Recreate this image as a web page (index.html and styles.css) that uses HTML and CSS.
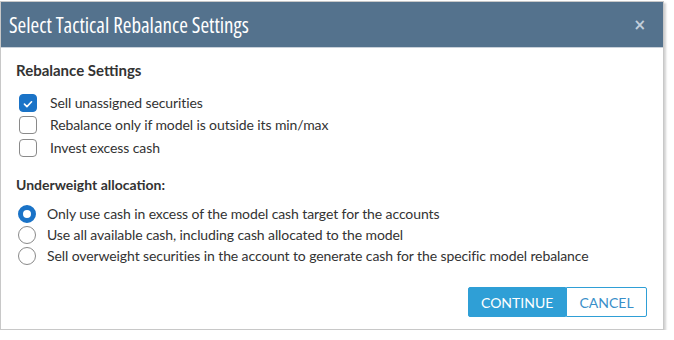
FILE: index.html
```html
<!DOCTYPE html>
<html>
<head>
<meta charset="utf-8">
<link rel="stylesheet" href="styles.css">
</head>
<body>
<div class="dialog">
  <div class="header">
    <span class="title">Select Tactical Rebalance Settings</span>
    <span class="close">×</span>
  </div>
  <div class="body">
    <div class="section-title">Rebalance Settings</div>
    <div class="options checks">
      <label class="opt"><span class="box checked"><svg viewBox="0 0 18 18" width="18" height="18"><path d="M5 9.2 L7.8 12 L13 6.5" fill="none" stroke="#fff" stroke-width="1.8" stroke-linecap="round" stroke-linejoin="round"/></svg></span>Sell unassigned securities</label>
      <label class="opt"><span class="box"></span>Rebalance only if model is outside its min/max</label>
      <label class="opt"><span class="box"></span>Invest excess cash</label>
    </div>
    <div class="sub-title">Underweight allocation:</div>
    <div class="options radios">
      <label class="opt"><span class="radio checked"></span>Only use cash in excess of the model cash target for the accounts</label>
      <label class="opt"><span class="radio"></span>Use all available cash, including cash allocated to the model</label>
      <label class="opt"><span class="radio"></span>Sell overweight securities in the account to generate cash for the specific model rebalance</label>
    </div>
    <div class="footer">
      <button class="btn primary">CONTINUE</button><button class="btn secondary">CANCEL</button>
    </div>
  </div>
</div>
</body>
</html>
```

FILE: styles.css
```css
html, body {
  margin: 0;
  padding: 0;
  background: #fff;
}
body {
  font-family: Lato, "Open Sans", sans-serif;
  color: #333;
}
.dialog {
  margin: 1px 0 0 0;
  width: 664px;
  height: 329px;
  border: 1px solid #c8c8c8;
  box-shadow: 2px 2px 2px rgba(0,0,0,0.18);
  box-sizing: border-box;
  background: #fff;
  display: flex;
  flex-direction: column;
}
.header {
  height: 46px;
  flex: none;
  background: #54728d;
  border-bottom: 1px solid #c9d1da;
  display: flex;
  align-items: center;
  justify-content: space-between;
  padding: 0 17px 0 8px;
  box-sizing: border-box;
}
.title {
  font-family: "Open Sans", sans-serif;
  font-stretch: 82%;
  font-size: 21px;
  color: #fff;
}
.close {
  color: #c3cfdb;
  font-size: 15px;
  font-weight: bold;
  font-family: "DejaVu Sans", sans-serif;
}
.body {
  padding: 13px 0 0 15px;
  flex: 1;
  display: flex;
  flex-direction: column;
}
.section-title {
  font-weight: bold;
  font-size: 15px;
  color: #333;
  line-height: 18px;
}
.options {
  display: flex;
  flex-direction: column;
}
.checks {
  margin-top: 15px;
  gap: 4.3px;
}
.opt {
  display: flex;
  align-items: center;
  font-size: 14px;
  letter-spacing: -0.1px;
  line-height: 18px;
  color: #333;
}
.checks .opt {
  gap: 13px;
  padding-left: 3px;
}
.box {
  width: 18px;
  height: 18px;
  box-sizing: border-box;
  border: 1px solid #8a8a8a;
  border-radius: 4px;
  background: #fff;
  display: flex;
}
.box.checked {
  background: #1a73c7;
  border-color: #1a73c7;
}
.sub-title {
  margin-top: 19px;
  font-weight: bold;
  font-size: 14px;
  line-height: 18px;
}
.radios {
  margin-top: 11px;
  gap: 3.3px;
}
.radios .opt {
  gap: 11px;
  padding-left: 2px;
}
.radio {
  width: 18px;
  height: 18px;
  box-sizing: border-box;
  border: 1px solid #8a8a8a;
  border-radius: 50%;
  background: #fff;
}
.radio.checked {
  border: 5px solid #1a73c7;
}
.footer {
  margin-top: 22px;
  display: flex;
  justify-content: flex-end;
  padding-right: 16px;
}
.btn {
  font-family: Lato, sans-serif;
  font-size: 14px;
  height: 30px;
  box-sizing: border-box;
  border: 1px solid #2f9fd6;
  padding: 0 12px;
}
.primary {
  background: #2f9fd6;
  color: #fff;
  width: 98px;
  border-radius: 2px 0 0 2px;
}
.secondary {
  background: #fff;
  color: #3a8fc9;
  width: 81px;
  border-radius: 0 2px 2px 0;
}
```
